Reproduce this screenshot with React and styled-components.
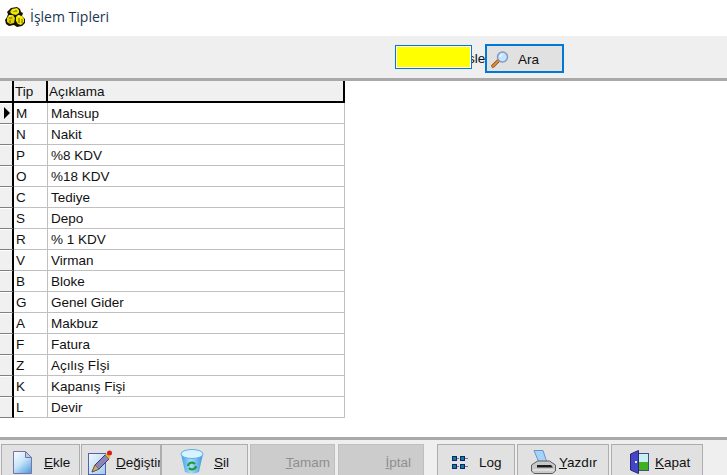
import React from 'react';
import styled, { createGlobalStyle } from 'styled-components';

const GlobalStyle = createGlobalStyle`
  html, body {
    margin: 0;
    padding: 0;
    background: #fff;
  }
`;

const Page = styled.div`
  width: 727px;
  height: 475px;
  overflow: hidden;
  display: flex;
  flex-direction: column;
  font-family: "Liberation Sans", Arial, sans-serif;
  font-size: 13.5px;
  color: #111;
`;

const TitleBar = styled.div`
  height: 36px;
  flex: none;
  display: flex;
  align-items: center;
  gap: 4px;
  padding: 0 0 3px 5px;
  box-sizing: border-box;
`;

const Title = styled.span`
  font-family: "Open Sans", sans-serif;
  font-size: 14px;
  color: #1c3550;
`;

const SearchBar = styled.div`
  height: 45px;
  flex: none;
  box-sizing: border-box;
  background: #efefef;
  border-bottom: 3px solid #a9a9a9;
  display: flex;
  align-items: flex-start;
  padding: 8px 0 0 395px;
`;

const SearchInput = styled.div`
  width: 77px;
  height: 24px;
  margin-top: 1px;
  flex: none;
  position: relative;
  z-index: 1;
  box-sizing: border-box;
  background: #ff0;
  border: 1px solid #0078d7;
  box-shadow: inset 0 0 0 1px #fff;
`;

const SearchLabel = styled.span`
  width: 17px;
  flex: none;
  margin: 7px 0 0 -4px;
  white-space: nowrap;
`;

const SearchButton = styled.div`
  width: 79px;
  height: 29px;
  flex: none;
  box-sizing: border-box;
  background: #e1e1e1;
  border: 2px solid #0078d7;
  display: flex;
  align-items: center;
  padding: 1px 0 0 4px;
  gap: 9px;
`;

const Content = styled.div`
  flex: 1;
  min-height: 0;
`;

const Grid = styled.div`
  width: 345px;
  display: grid;
  grid-template-columns: 14px 34px 1fr;
`;

const HeaderCell = styled.div`
  height: 22px;
  box-sizing: border-box;
  background: #f0f0f0;
  border-right: 2px solid #000;
  border-bottom: 2px solid #000;
  padding-left: 1px;
  line-height: 21px;
  overflow: hidden;
`;

const Indicator = styled.div`
  height: 21px;
  box-sizing: border-box;
  background: #f0f0f0;
  border-right: 2px solid #000;
  border-bottom: 1px solid #808080;
  box-shadow: inset 0 1px 0 #fff;
  display: flex;
  align-items: center;
  padding-left: 4px;
`;

const Cell = styled.div`
  height: 21px;
  box-sizing: border-box;
  border-right: 1px solid #c0c0c0;
  border-bottom: 1px solid #c0c0c0;
  padding-left: ${({ $wide }) => ($wide ? '3px' : '2px')};
  line-height: 21px;
  white-space: nowrap;
`;

const Footer = styled.div`
  height: 38px;
  flex: none;
  box-sizing: border-box;
  overflow: hidden;
  background: #efefef;
  border-top: 3px solid #a9a9a9;
  padding: 4px 0 0 1px;
  display: flex;
  align-items: flex-start;
`;

const ActionButton = styled.div`
  width: ${({ $width }) => $width}px;
  margin-left: ${({ $gap }) => $gap || 0}px;
  height: 36px;
  flex: none;
  box-sizing: border-box;
  background: ${({ $off }) => ($off ? '#cccccc' : '#e1e1e1')};
  border: 1px solid ${({ $off }) => ($off ? '#bfbfbf' : '#adadad')};
  color: ${({ $off }) => ($off ? '#8f8f8f' : '#111')};
  display: flex;
  align-items: center;
  justify-content: ${({ $off }) => ($off ? 'flex-end' : 'flex-start')};
  overflow: hidden;
  padding: 0 ${({ $end }) => $end || 0}px 0 ${({ $pad }) => $pad || 0}px;
  gap: ${({ $space }) => $space || 0}px;

  svg {
    flex: none;
  }
`;

const Label = styled.span`
  white-space: nowrap;
`;

const Key = styled.span`
  text-decoration: underline;
`;

const rows = [
  ['M', 'Mahsup'],
  ['N', 'Nakit'],
  ['P', '%8 KDV'],
  ['O', '%18 KDV'],
  ['C', 'Tediye'],
  ['S', 'Depo'],
  ['R', '% 1 KDV'],
  ['V', 'Virman'],
  ['B', 'Bloke'],
  ['G', 'Genel Gider'],
  ['A', 'Makbuz'],
  ['F', 'Fatura'],
  ['Z', 'Açılış Fİşi'],
  ['K', 'Kapanış Fişi'],
  ['L', 'Devir'],
];

const CoinsIcon = () => (
  <svg width="21" height="20" viewBox="0 0 21 20">
    <path d="M6 1l6-1 3 2 1 3 2 1-1 3 3 3v4l-3 3-5 1-3-2-5 1-3-2-1-4 2-3 1-3-1-2z" fill="#151300" />
    <path d="M7 2l5-1 2 2 0 3-3 2-4-1-2-2z" fill="#f2e600" />
    <path d="M4 8l4 0 2 3-1 5-4 1-3-2 0-4z" fill="#e2d200" />
    <path d="M13 8l4 1 2 3 0 3-3 3-3-1-2-3 0-4z" fill="#f6ea00" />
    <path d="M8 4h4M4 11l3 0M5 13v3M14 11v5M17 12v4" stroke="#6a6000" fill="none" />
    <path d="M8 3h2M13 9h2M4 9h2" stroke="#fffbb0" fill="none" />
  </svg>
);

const SearchIcon = () => (
  <svg width="18" height="17" viewBox="0 0 18 17">
    <path d="M7 10L2 15" stroke="#7a4a20" strokeWidth="3.4" strokeLinecap="round" />
    <path d="M7 10L2 15" stroke="#f08a20" strokeWidth="2" strokeLinecap="round" />
    <circle cx="11.5" cy="6" r="5" fill="#c4e4ff" stroke="#8498c0" strokeWidth="1.5" />
    <path d="M9 6a3 3 0 0 1 2.5-2.5" stroke="#fff" fill="none" />
  </svg>
);

const PageIcon = () => (
  <svg width="19" height="23" viewBox="0 0 19 23">
    <defs>
      <linearGradient id="pageFill" x1="0.1" y1="0" x2="0.8" y2="1">
        <stop offset="0" stopColor="#f6fbff" />
        <stop offset="0.5" stopColor="#c8e4f8" />
        <stop offset="1" stopColor="#58a4e4" />
      </linearGradient>
    </defs>
    <path d="M0.5 0.5h12l6 6v16h-18z" fill="url(#pageFill)" stroke="#77759f" />
    <path d="M12.5 0.5v6h6z" fill="#a8d0f0" stroke="#77759f" />
  </svg>
);

const PencilIcon = () => (
  <svg width="25" height="25" viewBox="0 0 25 25">
    <defs>
      <linearGradient id="sheetFill" x1="0" y1="0" x2="1" y2="1">
        <stop offset="0" stopColor="#f4faff" />
        <stop offset="1" stopColor="#9ccaf0" />
      </linearGradient>
    </defs>
    <rect x="0.5" y="3.5" width="17" height="21" fill="url(#sheetFill)" stroke="#5560a8" />
    <path d="M4 22l3-7L17 5l4 4-10 10z" fill="#8a84bc" stroke="#3e3a68" />
    <path d="M4 22l3-7 4 4z" fill="#d8a860" stroke="#5c4a38" strokeWidth="0.6" />
    <path d="M17 5l4 4 1.5-2-3.5-4z" fill="#e8b420" />
    <circle cx="21.5" cy="3" r="2.5" fill="#d81e1e" />
  </svg>
);

const BinIcon = () => (
  <svg width="24" height="26" viewBox="0 0 24 26">
    <defs>
      <linearGradient id="binFill" x1="0" y1="0" x2="1" y2="0">
        <stop offset="0" stopColor="#3d9ee8" />
        <stop offset="0.45" stopColor="#a8dcf8" />
        <stop offset="1" stopColor="#3d96e0" />
      </linearGradient>
    </defs>
    <path d="M1 5l4 18q7 3 14 0l4-18z" fill="url(#binFill)" />
    <ellipse cx="12" cy="5" rx="11" ry="4.5" fill="#d8f2ff" stroke="#58b0e8" />
    <path d="M8 17a4 4 0 0 1 7-2M16 17a4 4 0 0 1-7 2" stroke="#209a38" strokeWidth="2.2" fill="none" />
  </svg>
);

const LogIcon = () => (
  <svg width="16" height="13" viewBox="0 0 16 13">
    <rect x="0.5" y="0.5" width="4" height="4" fill="#108080" stroke="#102080" />
    <rect x="8.5" y="0.5" width="4" height="4" fill="#108080" stroke="#102080" />
    <rect x="0.5" y="8.5" width="4" height="4" fill="#108080" stroke="#102080" />
    <rect x="8.5" y="8.5" width="4" height="4" fill="#108080" stroke="#102080" />
    <path d="M5 2.5h2M13 2.5h3M5 10.5h2M13 10.5h3" stroke="#777" />
  </svg>
);

const PrinterIcon = () => (
  <svg width="25" height="24" viewBox="0 0 25 24">
    <path d="M3 0.5h9l4 12H8z" fill="#a4d2f8" stroke="#6c94c8" />
    <path d="M0.5 15l6-4h12l6 4v6l-3 2.5H3l-2.500-2.500z" fill="#c8c8c8" stroke="#5e5e5e" />
    <path d="M6 15h14l2 2.5H6z" fill="#1c1c1c" />
    <path d="M2 20h21" stroke="#f2f2f2" />
  </svg>
);

const DoorIcon = () => (
  <svg width="19" height="24" viewBox="0 0 19 24">
    <rect x="6.5" y="3.5" width="12" height="17" fill="#c8f0f4" stroke="#405080" />
    <rect x="9" y="12" width="9" height="8" fill="#40b020" />
    <path d="M0.5 4l8-3.500v23l-8-3.500z" fill="#4444c8" stroke="#282868" />
    <rect x="5" y="11" width="2" height="2" fill="#e8e8ff" />
  </svg>
);

const App = () => {
  return (
    <Page>
      <GlobalStyle />
      <TitleBar>
        <CoinsIcon />
        <Title>İşlem Tipleri</Title>
      </TitleBar>
      <SearchBar>
        <SearchInput />
        <SearchLabel>sle</SearchLabel>
        <SearchButton>
          <SearchIcon />
          <span>Ara</span>
        </SearchButton>
      </SearchBar>
      <Content>
        <Grid>
          <HeaderCell />
          <HeaderCell>Tip</HeaderCell>
          <HeaderCell>Açıklama</HeaderCell>
          {rows.map(([tip, text], index) => (
            <React.Fragment key={tip}>
              <Indicator>
                {index === 0 && (
                  <svg width="6" height="12" viewBox="0 0 6 12">
                    <path d="M0 0l6 6-6 6z" fill="#000" />
                  </svg>
                )}
              </Indicator>
              <Cell>{tip}</Cell>
              <Cell $wide>{text}</Cell>
            </React.Fragment>
          ))}
        </Grid>
      </Content>
      <Footer>
        <ActionButton $width={79} $pad={11} $space={12}>
          <PageIcon />
          <Label><Key>E</Key>kle</Label>
        </ActionButton>
        <ActionButton $width={80} $gap={1} $pad={6} $space={3}>
          <PencilIcon />
          <Label><Key>D</Key>eğiştir</Label>
        </ActionButton>
        <ActionButton $width={87} $pad={18} $space={10}>
          <BinIcon />
          <Label><Key>S</Key>il</Label>
        </ActionButton>
        <ActionButton $off $width={85} $gap={2} $end={4}>
          <Label><Key>T</Key>amam</Label>
        </ActionButton>
        <ActionButton $off $width={86} $gap={3} $end={12}>
          <Label><Key>İ</Key>ptal</Label>
        </ActionButton>
        <ActionButton $width={78} $gap={13} $pad={14} $space={11}>
          <LogIcon />
          <Label>Log</Label>
        </ActionButton>
        <ActionButton $width={92} $gap={2} $pad={13} $space={3}>
          <PrinterIcon />
          <Label><Key>Y</Key>azdır</Label>
        </ActionButton>
        <ActionButton $width={92} $gap={2} $pad={18} $space={6}>
          <DoorIcon />
          <Label><Key>K</Key>apat</Label>
        </ActionButton>
      </Footer>
    </Page>
  );
};

export default App;
